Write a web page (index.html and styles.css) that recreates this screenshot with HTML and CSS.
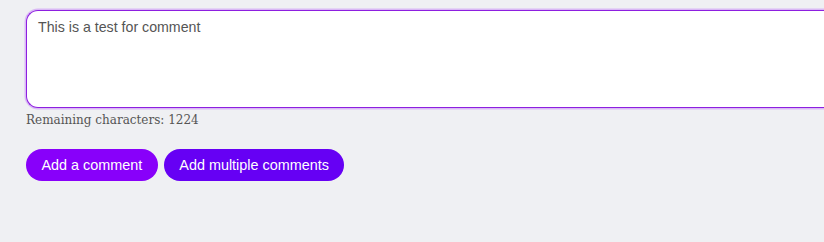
FILE: index.html
```html
<!DOCTYPE html>
<html>
<head>
<meta charset="utf-8">
<link rel="stylesheet" href="styles.css">
</head>
<body>
<div class="page">
  <div class="comment-box">This is a test for comment</div>
  <div class="remaining">Remaining characters: 1224</div>
  <div class="actions">
    <button class="btn btn-one">Add a comment</button>
    <button class="btn btn-multi">Add multiple comments</button>
  </div>
</div>
</body>
</html>
```
FILE: styles.css
```css
html, body {
  margin: 0;
  padding: 0;
  background: #eff0f3;
  overflow: hidden;
}
.page {
  padding: 10px 0 0 26px;
}
.comment-box {
  box-sizing: border-box;
  width: 100%;
  height: 98px;
  background: #fff;
  border: 1.5px solid #8d1fe0;
  border-right: none;
  border-radius: 12px 0 0 12px;
  box-shadow: 0 0 0 1.5px #d9b8f5;
  padding: 8px 11px;
  font-family: "Liberation Sans", Arial, sans-serif;
  font-size: 14.2px;
  color: #555;
}
.remaining {
  margin-top: 3px;
  font-family: "DejaVu Serif", Georgia, serif;
  font-size: 12px;
  color: #555;
  line-height: 18px;
}
.actions {
  display: flex;
  gap: 6px;
  margin-top: 20px;
}
.btn {
  border: none;
  height: 32px;
  border-radius: 16px;
  padding: 0 15.5px;
  font-family: "Liberation Sans", Arial, sans-serif;
  font-size: 14.4px;
  color: #fff;
  cursor: pointer;
}
.btn-one { background: #8800fa; }
.btn-multi { background: #6600f4; }
```
